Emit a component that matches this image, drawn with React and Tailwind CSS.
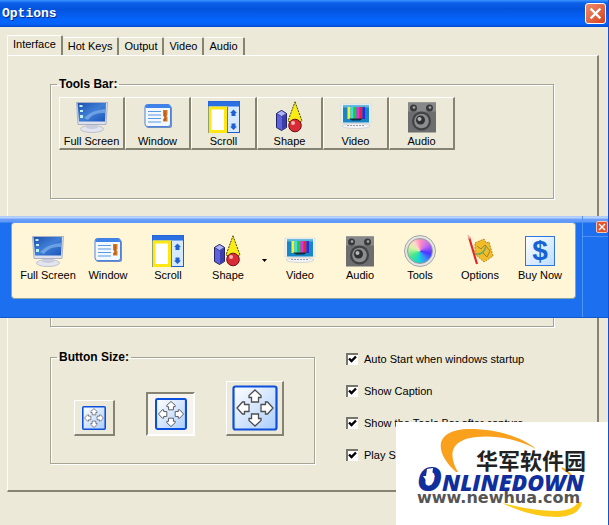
import React, { useState } from "react";

const FullScreenIcon = () => (
  <svg width="32" height="32" viewBox="0 0 32 32">
    <defs>
      <linearGradient id="screen" x1="0" y1="0" x2="1" y2="1">
        <stop offset="0" stopColor="#1d4fae" />
        <stop offset="0.5" stopColor="#3f7fd6" />
        <stop offset="1" stopColor="#1c55b8" />
      </linearGradient>
    </defs>
    <ellipse cx="16" cy="28" rx="11.500" ry="3.500" fill="#e3e5f0" stroke="#b3b6c6" strokeWidth="0.800" />
    <path d="M11 23h10l1 4q-6 2-12 0z" fill="#c9ccdb" />
    <path d="M0.500 1.500h31l-1.500 22h-28z" fill="#dfe2ee" stroke="#9ca3bd" strokeWidth="0.800" />
    <path d="M1.500 2h28.500l-1 18.500h-26z" fill="url(#screen)" />
    <path d="M8 17q8-8 21-9v4q-12-1-17 7z" fill="#8fbdf2" opacity="0.600" />
    <path d="M3.500 4h3v2h-3zM4 9h3v2h-3zM4 14h3v3h-3z" fill="#bff0ee" />
  </svg>
);

const WindowIcon = () => (
  <svg width="32" height="32" viewBox="0 0 32 32">
    <rect x="4" y="5" width="26" height="22" rx="2.500" fill="#6d8fc4" />
    <rect x="3" y="3.500" width="25.500" height="22" rx="2.500" fill="#f3f8ff" stroke="#4d83dc" />
    <path d="M3.500 7V5.500q0-2 2-2h20.500q2 0 2 2V7z" fill="#3f82ea" />
    <path d="M6 10.500h13M6 14h13M6 17.500h13M6 21h13" stroke="#5a9ae0" strokeWidth="1.200" />
    <path d="M21 9h4.500v5l-1 1 1 1v4.500h-4.500V18l2-1.500-2-1.500z" fill="#d97a26" />
    <path d="M23 10v10" stroke="#a84e10" />
  </svg>
);

const ScrollIcon = () => (
  <svg width="32" height="32" viewBox="0 0 32 32">
    <rect x="0.500" y="0.500" width="31" height="31" fill="#d5e9ff" stroke="#1e5bd2" />
    <rect x="0.500" y="0.500" width="31" height="5" fill="#2b70e2" />
    <rect x="2" y="7" width="15.500" height="23.500" fill="#fff" stroke="#ffe713" strokeWidth="3" />
    <path d="M19.500 6v25.500" stroke="#3b79dd" />
    <path d="M25.500 8.500l3.500 3.500h-1.500v3h-4v-3h-1.500zM25.500 29l3.500-3.500h-1.500v-3h-4v3h-1.500z" fill="#2161ce" />
  </svg>
);

const ShapeIcon = () => (
  <svg width="32" height="32" viewBox="0 0 32 32">
    <path d="M2.500 12.500l5-3 5 3v14l-5 3-5-3z" fill="#5d63d8" stroke="#24246b" />
    <path d="M2.500 12.500l5 3 5-3-5-3z" fill="#aeb4fb" stroke="#24246b" strokeWidth="0.700" />
    <path d="M8 16v12.500l4-2.500V13.500z" fill="#3b3eaa" />
    <path d="M21 0.800l7 19.200q-6 3-14 0z" fill="#f8eb16" stroke="#4b4400" strokeDasharray="2 1" />
    <circle cx="21" cy="24.500" r="6.300" fill="#d82b35" stroke="#6b1018" />
    <circle cx="19" cy="22" r="2" fill="#ffb3b0" />
  </svg>
);

const VideoIcon = () => (
  <svg width="32" height="32" viewBox="0 0 32 32">
    <path d="M1 3h30v19h-30z" fill="#eef3f6" stroke="#cdd9e0" strokeWidth="0.600" />
    <path d="M3 4.500h26v17h-26z" fill="#1687c4" />
    <path d="M3 4.500h26v2h-26z" fill="#55b6df" />
    <path d="M7.500 6h3v12h-3z" fill="#f5ef35" />
    <path d="M10.500 6h3v12h-3z" fill="#3fdde0" />
    <path d="M13.500 6h3v12h-3z" fill="#23c83c" />
    <path d="M16.500 6h3v12h-3z" fill="#e830d8" />
    <path d="M19.500 6h3v12h-3z" fill="#e12834" />
    <path d="M22.500 6h2.500v12h-2.500z" fill="#262be0" />
    <path d="M9 17.500h14l-3 2h-8z" fill="#102a3c" />
    <ellipse cx="16" cy="25" rx="14" ry="2.500" fill="#f4f4f6" stroke="#c5c8d0" strokeWidth="0.700" />
    <path d="M7 24.500h18" stroke="#969ba6" strokeDasharray="2 1" />
  </svg>
);

const AudioIcon = () => (
  <svg width="32" height="32" viewBox="0 0 32 32">
    <rect x="2" y="1.500" width="28" height="30" fill="#6c6d6e" />
    <path d="M2 1.500h28v9h-28z" fill="#87888a" />
    <circle cx="7.500" cy="7" r="3.500" fill="#3a3a3b" />
    <circle cx="8" cy="6.500" r="1.300" fill="#aaa" />
    <circle cx="23.500" cy="7" r="3.500" fill="#3a3a3b" />
    <circle cx="24" cy="6.500" r="1.300" fill="#aaa" />
    <circle cx="15.500" cy="20" r="9.500" fill="#414243" />
    <circle cx="15.500" cy="20" r="7.300" fill="#8c8d8e" />
    <circle cx="14.500" cy="19" r="4.500" fill="#303132" />
    <circle cx="13.500" cy="18" r="2" fill="#b6b7b8" />
  </svg>
);

const ToolsIcon = () => (
  <span className="flex size-8 items-center justify-center rounded-full border border-[#a4a6a6] bg-[#e4e6e4]">
    <span className="size-[26px] rounded-full border border-[#999] bg-[conic-gradient(#ff8fc0,#c86cf0_50deg,#4a35ff_105deg,#3b8dff_145deg,#14d8d0_190deg,#4de68a_240deg,#d8f4a8_290deg,#ffd9c8_325deg,#ff8fc0)]" />
  </span>
);

const OptionsIcon = () => (
  <svg width="32" height="32" viewBox="0 0 32 32">
    <path d="M11 8l9-4 2 4 3-1 4 14-9 6-9-8z" fill="#f0bd29" stroke="#ba861b" strokeDasharray="2 1" />
    <path d="M13 11l4 3 4-4 5 6-3 6-5-5-3 3" fill="none" stroke="#a2822a" />
    <path d="M12 19q8 1 10-8" fill="none" stroke="#69ad63" strokeWidth="1.500" />
    <path d="M5 2l8 27" stroke="#dc2b27" strokeWidth="2.200" />
    <path d="M4 0l1.500 4" stroke="#f0b4a0" strokeWidth="1.500" />
  </svg>
);

const BuyIcon = () => (
  <span className="flex size-[30px] items-center justify-center border border-[#2f76e0] bg-linear-to-br from-white to-[#bddcff] font-['Liberation_Sans',sans-serif] text-[28px] leading-7 font-bold text-[#1763d4]">
    $
  </span>
);

const ArrowsIcon = ({ size }) => (
  <svg width={size} height={size} viewBox="0 0 46 46">
    <defs>
      <linearGradient id="tile" x1="0" y1="0" x2="1" y2="1">
        <stop offset="0" stopColor="#fff" />
        <stop offset="1" stopColor="#a9cdfb" />
      </linearGradient>
    </defs>
    <rect
      x="1.500"
      y="1.500"
      width="43"
      height="43"
      rx="2"
      fill="url(#tile)"
      stroke="#0c4fdd"
      strokeWidth={size > 40 ? 2.2 : 3}
    />
    {[0, 90, 180, 270].map((angle) => (
      <path
        key={angle}
        d="M23 5l6 5.500v2h-2.500v4.500h-7v-4.500h-2.500v-2z"
        transform={`rotate(${angle} 23 23)`}
        fill="#fff"
        stroke="#4e4e50"
        strokeWidth="1.300"
      />
    ))}
  </svg>
);

const CloseMark = ({ size }) => (
  <svg width={size} height={size} viewBox="0 0 12 12">
    <path d="M1.500 1.500l9 9M10.500 1.500l-9 9" stroke="#fff" strokeWidth="2" />
  </svg>
);

const captureTools = [
  { label: "Full Screen", Icon: FullScreenIcon },
  { label: "Window", Icon: WindowIcon },
  { label: "Scroll", Icon: ScrollIcon },
  { label: "Shape", Icon: ShapeIcon },
  { label: "Video", Icon: VideoIcon },
  { label: "Audio", Icon: AudioIcon },
];

const extraTools = [
  { label: "Tools", Icon: ToolsIcon },
  { label: "Options", Icon: OptionsIcon },
  { label: "Buy Now", Icon: BuyIcon },
];

const tabs = ["Interface", "Hot Keys", "Output", "Video", "Audio"];

const settings = [
  "Auto Start when windows startup",
  "Show Caption",
  "Show the Tools Bar after capture",
  "Play Sound",
];

const groupStyle = "border border-[#a5a393] shadow-[1px_1px_0_#fff,inset_1px_1px_0_#fff]";
const raised = "border-t border-l border-r-2 border-b-2 border-t-white border-l-white border-r-[#858372] border-b-[#858372]";

const ToolButton = ({ tool, className }) => (
  <button className={`flex flex-col items-center whitespace-nowrap ${className}`}>
    <span className="flex h-8 items-center">
      <tool.Icon />
    </span>
    <span className="leading-4">{tool.label}</span>
  </button>
);

const CheckOption = ({ label }) => {
  const [checked, setChecked] = useState(true);

  return (
    <label className="flex h-4 items-center gap-[6px] whitespace-nowrap">
      <span className="grid">
        <input
          type="checkbox"
          checked={checked}
          onChange={(e) => setChecked(e.target.checked)}
          className="col-start-1 row-start-1 size-3 appearance-none border-t-2 border-l-2 border-[#77756a] bg-white"
        />
        {checked && (
          <svg className="pointer-events-none col-start-1 row-start-1" width="12" height="12" viewBox="0 0 12 12">
            <path d="M3 5.500l2.500 2.500 4.500-4.500" fill="none" stroke="#000" strokeWidth="2.400" />
          </svg>
        )}
      </span>
      {label}
    </label>
  );
};

const FloatingBar = () => (
  <div className="absolute inset-x-0 top-[216px] flex h-[102px] border-b border-[#1459cc] bg-[linear-gradient(#a8c8fb_0,#bdd5fb_2px,#6ba0fa_3px,#5f98f8_6px,#1c70ef_7px)]">
    {/* TOOLS */}
    <div className="mt-[6px] mr-[6px] mb-[18px] ml-[11px] flex flex-1 rounded-sm border border-[#8ba5a0] border-t-[#5e9bfa] bg-[#fff5d7] pt-3 pl-[6px]">
      {captureTools.slice(0, 4).map((tool) => (
        <ToolButton key={tool.label} tool={tool} className="w-[60px]" />
      ))}
      <button aria-label="More shapes" className="flex h-[50px] w-3 items-center justify-center">
        <svg width="5" height="3" viewBox="0 0 5 3">
          <path d="M0 0h5l-2.500 3z" fill="#000" />
        </svg>
      </button>
      {captureTools.slice(4).concat(extraTools).map((tool) => (
        <ToolButton key={tool.label} tool={tool} className="w-[60px]" />
      ))}
    </div>

    {/* CLOSE */}
    <div className="w-[26px] border-l border-[#5295f7]">
      <div className="flex h-[21px] items-end justify-end border-b border-[#4f8ff2] pb-[3px]">
        <button aria-label="Close toolbar" className="flex size-3 items-center justify-center rounded-xs border border-[#f4c5b4] bg-[#e2552f]">
          <CloseMark size={8} />
        </button>
      </div>
    </div>
  </div>
);

const SiteLogo = () => (
  <div className="absolute right-0 bottom-0 h-[103px] w-[212px] bg-white">
    <svg className="absolute inset-0" width="212" height="103" viewBox="0 0 212 103">
      <path d="M60 50C36 28 40 7 74 7c27 0 52 8 66 20C119 16 98 13 80 15 54 18 52 33 62 50z" fill="#f9a01c" />
      <path d="M106 81q30 8 56 8 16-1 20-9h4q-2 14-24 15-28 0-56-14z" fill="#fcc917" />
      <path d="M166 46q10 6 14 14" fill="none" stroke="#f9a01c" strokeWidth="2" />
    </svg>
    <div className="relative flex h-full flex-col pt-[26px] pl-[21px]">
      <span className="pl-[59px] font-['Noto_Sans_CJK_SC',sans-serif] text-[22px] leading-[22px] font-bold text-[#222]">
        华军软件园
      </span>
      <span className="flex items-baseline font-['Open_Sans',sans-serif] text-[23px] leading-4 font-extrabold text-[#102f9d] italic">
        <span className="text-[34px]">O</span>NLINEDOWN
      </span>
      <span className="font-['DejaVu_Sans',sans-serif] text-base leading-4 font-bold text-[#555]">
        www.newhua.com
      </span>
    </div>
    <svg className="absolute top-[44px] left-[25px]" width="16" height="20" viewBox="0 0 16 20">
      <path d="M6 3l6-1-1 8h3l-7 7-5-7h3z" fill="#fff" />
    </svg>
  </div>
);

const App = () => {
  const [activeTab, setActiveTab] = useState("Interface");
  const [buttonSize, setButtonSize] = useState(32);

  return (
    <div className="relative min-h-screen overflow-hidden border-r border-[#1151d8] bg-[#ece9d8] font-['Liberation_Sans',sans-serif] text-[11px] text-black">

      {/* TITLE BAR */}
      <header className="flex h-[27px] items-center justify-between bg-[linear-gradient(#3c94ff_0,#0a5fe8_3px,#0553dd_9px,#0565fc_20px,#0563f8_24px,#0348cc_27px)] pr-[2px] pl-[2px]">
        <h1 className="font-['Liberation_Mono',monospace] text-[13px] font-bold text-white [text-shadow:1px_1px_0_#0a2e87]">
          Options
        </h1>
        <button aria-label="Close" className="flex size-[21px] items-center justify-center rounded-[3px] border border-white bg-linear-to-br from-[#ee8b6c] to-[#d33f16]">
          <CloseMark size={13} />
        </button>
      </header>

      {/* TABS */}
      <nav className="flex h-7 items-end pl-[7px]">
        {tabs.map((tab) => (
          <button
            key={tab}
            onClick={() => setActiveTab(tab)}
            className={`rounded-t-xs border-t border-r-2 border-t-white border-r-[#858372] px-[5px]
            ${tab === activeTab ? "h-5 border-l border-l-white pb-1" : "h-[18px]"}`}
          >
            {tab}
          </button>
        ))}
      </nav>

      {/* TAB PAGE */}
      <main className="mr-[9px] ml-[7px] border-t border-r-2 border-b-2 border-l border-t-white border-r-[#858372] border-b-[#858372] border-l-white pt-5 pr-[43px] pb-[26px] pl-[42px]">
        <fieldset className={`h-[123px] ${groupStyle}`}>
          <legend className="ml-[6px] px-[2px] text-[12px] leading-4 font-bold">Tools Bar:</legend>
          <div className="mt-[5px] ml-2 flex">
            {captureTools.map((tool) => (
              <ToolButton key={tool.label} tool={tool} className={`h-[53px] w-[66px] pt-[3px] ${raised}`} />
            ))}
          </div>
        </fieldset>

        <div className={`mt-6 h-[104px] ${groupStyle}`} />

        <div className="mt-[22px] flex gap-[31px]">
          <fieldset className={`h-[115px] w-[265px] ${groupStyle}`}>
            <legend className="ml-[6px] px-[2px] text-[12px] leading-4 font-bold">Button Size:</legend>
            <div className="mt-4 ml-[23px] flex items-end gap-[31px]">
              <button aria-label="Small buttons" onClick={() => setButtonSize(24)} className={`flex h-9 w-[41px] items-center justify-center ${raised}`}>
                <ArrowsIcon size={24} />
              </button>
              <button
                aria-label="Medium buttons"
                aria-pressed={buttonSize === 32}
                onClick={() => setButtonSize(32)}
                className="flex h-11 w-[49px] items-center justify-center border-2 border-t-[#858372] border-r-white border-b-white border-l-[#858372] bg-[#f6f4ec]"
              >
                <ArrowsIcon size={32} />
              </button>
              <button aria-label="Large buttons" onClick={() => setButtonSize(46)} className={`flex h-[55px] w-[58px] items-center justify-center ${raised}`}>
                <ArrowsIcon size={46} />
              </button>
            </div>
          </fieldset>

          <div className="flex flex-col gap-4 pt-[2px]">
            {settings.map((label) => (
              <CheckOption key={label} label={label} />
            ))}
          </div>
        </div>
      </main>

      <FloatingBar />
      <SiteLogo />
    </div>
  );
};

export default App;
